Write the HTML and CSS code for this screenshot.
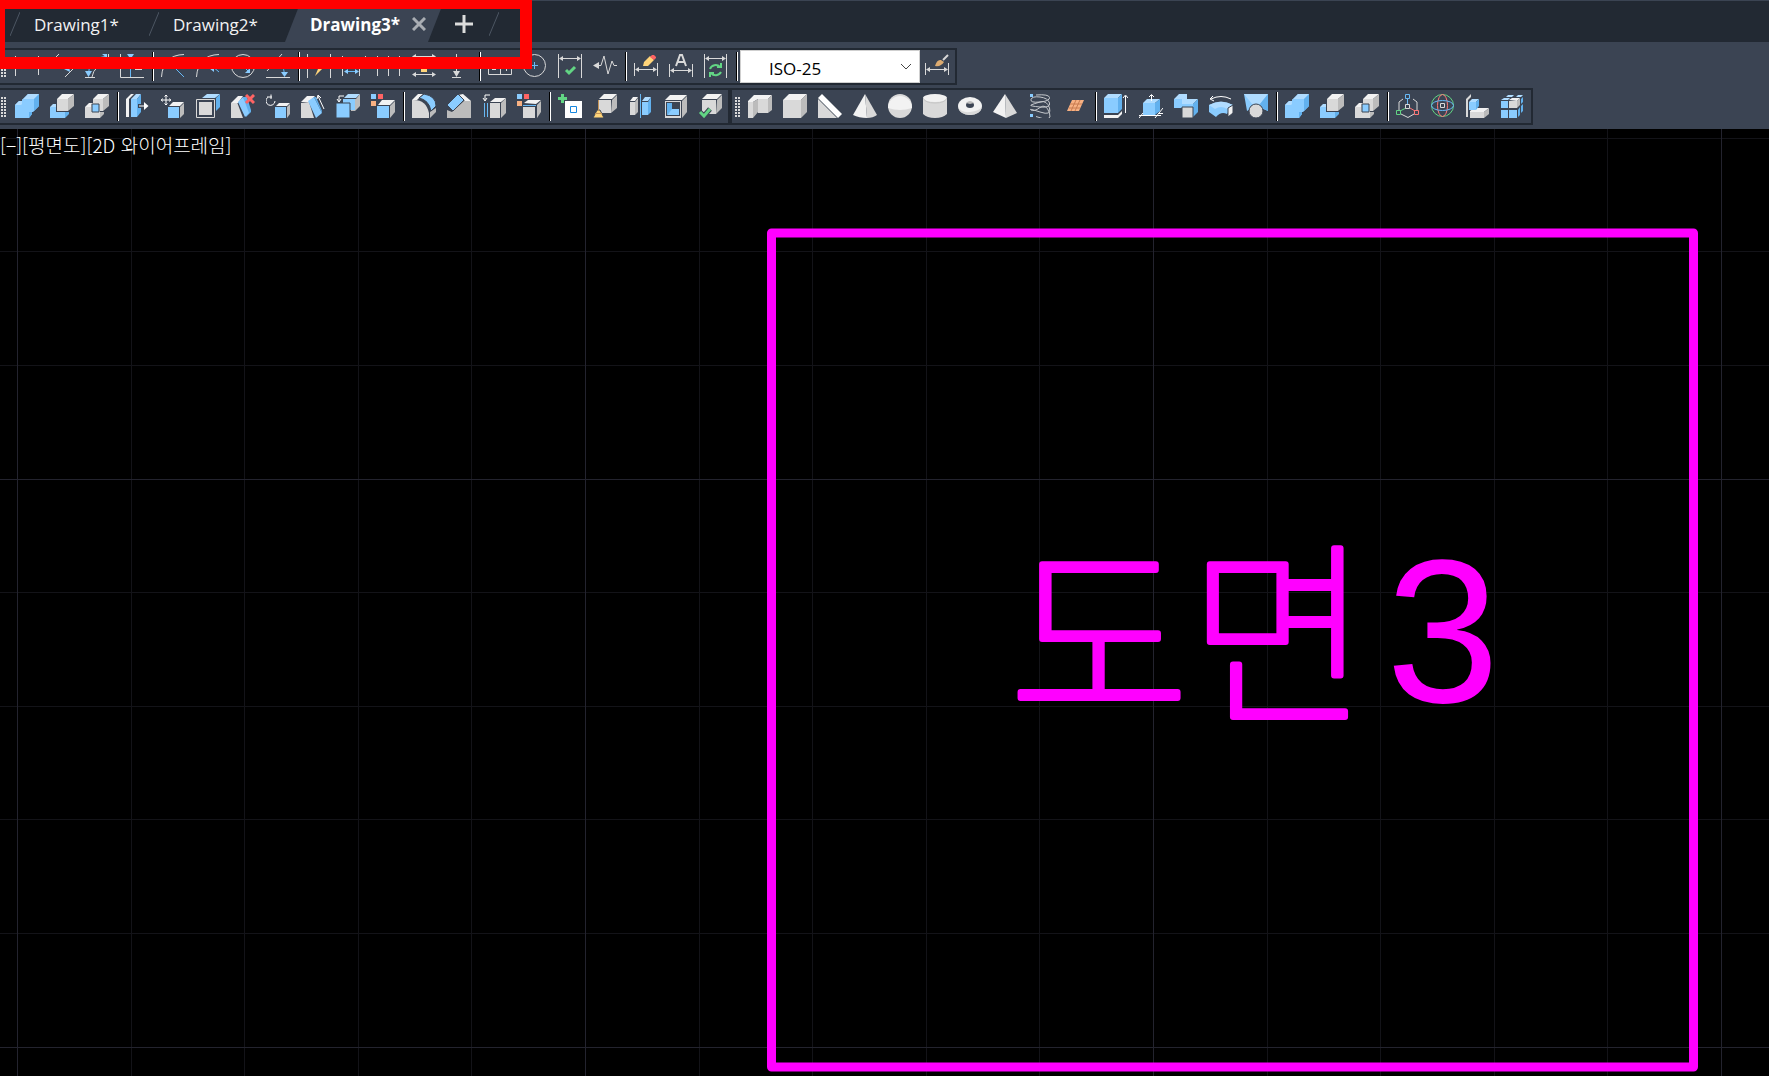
FILE: index.html
```html
<!DOCTYPE html>
<html lang="ko">
<head>
<meta charset="utf-8">
<meta name="viewport" content="width=device-width, initial-scale=1">
<title>Drawing3</title>
<link rel="stylesheet" href="styles.css">
</head>
<body>
<svg class="defs" aria-hidden="true">
  <!-- Solid editing -->
  <symbol id="union" viewBox="0 0 24 24"><path class="b1" d="M0 11 4 7H7V6L13 0H24V12L18 18H17V20L14 24H0Z"/><path class="b2" d="M7 6 13 0H24L19 5H7ZM0 11 4 7H7V10L6 11Z"/><path class="b3" d="M19 5 24 0V12L19 17ZM14 18H17V20L14 24Z"/></symbol>
  <symbol id="subtract" viewBox="0 0 24 24"><path class="b1" d="M0 13H6V18H15V24H0Z"/><path class="b2" d="M0 13 3 10H6V13Z"/><path class="b3" d="M15 18H19V20L15 24Z"/><path class="g1" d="M7 5H18V17H7Z"/><path class="g2" d="M7 5 12 0H24L18 5Z"/><path class="g3" d="M18 5 24 0V12L18 17Z"/></symbol>
  <symbol id="intersect" viewBox="0 0 24 24"><path class="g1" d="M0 13H6V9H15V24H0ZM8 5H18V17H15V9H8Z"/><path class="g2" d="M0 13 4 9H6V13ZM8 5 13 0H24L18 5Z"/><path class="g3" d="M18 5 24 0V12L18 17ZM15 18H19V20L15 24Z"/><path class="b1 edge" d="M7 10H14V18H7Z"/></symbol>
  <symbol id="extrude-face" viewBox="0 0 24 24"><path class="g1" d="M0 5H3V23H0Z"/><path class="g2" d="M0 5 5 0H8L3 5V23H0Z"/><path class="b1" d="M5 5H11V23H5Z"/><path class="b2" d="M5 5 10 0H15L11 5Z"/><path class="b3" d="M11 5 15 0V18L11 23Z"/><path class="dark" d="M12 10H18V14H12Z"/><path class="w" d="M13 11.500H18V8L22.500 12 18 16V12.500H13Z"/></symbol>
  <symbol id="move-face" viewBox="0 0 24 24"><path class="b1" d="M7 13H18V24H7Z"/><path class="g2" d="M8 12 12 8H23L19 12Z"/><path class="g3" d="M19 13 23 9V20L19 24Z"/><path class="lw" d="M5 1V11M0 6H10M3.500 2.500 5 1 6.500 2.500M3.500 9.500 5 11 6.500 9.500M1.500 4.500 0.500 6 1.500 7.500M8.500 4.500 9.500 6 8.500 7.500"/></symbol>
  <symbol id="offset-face" viewBox="0 0 24 24"><path class="b2" d="M6 4 11 0H24L19 4Z"/><path class="b3" d="M20 4 24 0V13L20 17Z"/><path class="lg" d="M.5 5.500H18.500V23.500H.5Z"/><path class="g1" d="M3 8H16V21H3Z"/></symbol>
  <symbol id="delete-face" viewBox="0 0 24 24"><path class="g1" d="M0 9 6 8 12 24H0Z"/><path class="g2" d="M0 9 7 2H12L7 9Z"/><path class="b3" d="M12 3H16L20 16V18L15 23Z"/><path class="b1" d="M7 8 12 3 18 19 14 23Z"/><path class="lx" d="M15 1 23 9M23 1 15 9"/></symbol>
  <symbol id="rotate-face" viewBox="0 0 24 24"><path class="b1" d="M9 13H20V24H9Z"/><path class="g2" d="M10 12 13 9H24L21 12Z"/><path class="g3" d="M21 13 24 10V20L21 24Z"/><path class="lw" d="M1.500 3.500A4.500 4.500 0 1 0 9 7M1 3H6M5 .5V5"/></symbol>
  <symbol id="taper-face" viewBox="0 0 24 24"><path class="g1" d="M0 9 8 8 13 24H0Z"/><path class="g2" d="M0 8 6 2H14L8 8Z"/><path class="b1" d="M7 7 13 3 21 19 15 24Z"/><path class="b3" d="M13 3H15L21 17V19Z"/><path class="lw" d="M17 2 23 15M16 5 17 1 20 4"/></symbol>
  <symbol id="copy-face" viewBox="0 0 24 24"><path class="b2" d="M8 4 12 0H24L20 4Z"/><path class="g3" d="M15 5H20L24 0V12L19 17H15Z"/><path class="b1" d="M7 5H19V16H7Z"/><path class="b1 edge" d="M0 9H14V24H0Z"/><path class="lw" d="M8 2H3V7M1 5 3 8 5 5"/></symbol>
  <symbol id="color-face" viewBox="0 0 24 24"><path class="b1" d="M0 0H5V5H0ZM6 12H18V24H6Z"/><path class="r1" d="M7 0H12V5H7Z"/><path class="o1" d="M0 7H5V12H0Z"/><path class="g2" d="M7 11 11 6H24L19 11Z"/><path class="g3" d="M19 12 24 7V18L19 24Z"/></symbol>
  <symbol id="fillet-edge" viewBox="0 0 24 24"><path class="g1" d="M0 6Q14 5 17 19V24H0Z"/><path class="g2" d="M0 6 6 0H11L5 6Z"/><path class="g3" d="M18 18 24 14V18L18 24Z"/><path class="b1 edge" d="M7 4 12 0Q24 2 24 12L19 17Q17 6 7 4Z"/></symbol>
  <symbol id="chamfer-edge" viewBox="0 0 24 24"><path class="g3" d="M0 16 5 18 17 7 24 7V24H0Z"/><path class="g2" d="M11 1 16 0 24 7 18 7Z"/><path class="b1 edge" d="M0 11 11 0 17 6 6 17Z"/></symbol>
  <symbol id="copy-edge" viewBox="0 0 24 24"><path class="g1" d="M8 9H18V24H8Z"/><path class="g2" d="M8 8 13 4H24L19 8Z"/><path class="g3" d="M19 9 24 4V19L19 24Z"/><path class="lb" d="M2.500 9V23M5.500 9V23"/><path class="lw" d="M8 1H3V6M1 4 3 7 5 4"/></symbol>
  <symbol id="color-edge" viewBox="0 0 24 24"><path class="b1" d="M0 0H5V5H0Z"/><path class="r1" d="M7 0H12V5H7Z"/><path class="o1" d="M0 7H5V12H0Z"/><path class="g1" d="M6 13H18V24H6Z"/><path class="g2" d="M7 9 11 6H24L19 10Z"/><path class="lb" d="M6 11.500H19"/><path class="g3" d="M20 11 24 7V18L20 24Z"/></symbol>
  <symbol id="imprint" viewBox="0 0 24 24"><path class="w" d="M7 7H24V24H7Z"/><path class="ldb" d="M12.500 12.500H18.500V18.500H12.500Z"/><path class="green" d="M3 0H6V3H9V6H6V9H3V6H0V3H3Z"/></symbol>
  <symbol id="clean" viewBox="0 0 24 24"><path class="g1" d="M6 6H18V19H6Z"/><path class="g2" d="M6 5 11 0H24L19 5Z"/><path class="g3" d="M19 6 24 1V14L18 19Z"/><path class="y1 edge" d="M4 16 0 24H11L7 16Z"/><path class="lo" d="M5.500 6V17M2 19.500H9"/></symbol>
  <symbol id="separate" viewBox="0 0 24 24"><path class="g1" d="M2 8H7V21H2Z"/><path class="g2" d="M2 7 5 3H10L7 7Z"/><path class="g3" d="M7 8 10 4V18L7 21Z"/><path class="b1" d="M14 8H20V21H14Z"/><path class="b2" d="M14 7 17 3H23L20 7Z"/><path class="b3" d="M20 8 23 3V18L20 21Z"/><path class="lb" d="M12.500 0V24"/></symbol>
  <symbol id="shell" viewBox="0 0 24 24"><path class="g1" d="M2 7H18V24H2Z"/><path class="g2" d="M2 6 7 1H24L19 6Z"/><path class="g3" d="M19 7 24 2V18L19 24Z"/><path class="dark" d="M3 8H17V22H3Z"/><path class="b3" d="M4 9H9V16L4 21Z"/><path class="b1" d="M4 21 9 15H16V21Z"/></symbol>
  <symbol id="check-solid" viewBox="0 0 24 24"><path class="g1" d="M4 6H18V20H4Z"/><path class="g2" d="M4 5 9 0H24L19 5Z"/><path class="g3" d="M19 6 24 1V14L18 20Z"/><path class="halo" d="M2 18 6 22 12 15"/><path class="lgreen" d="M2 18 6 22 12 15"/></symbol>
  <!-- Modeling -->
  <symbol id="polysolid" viewBox="0 0 24 24"><path class="g2" d="M0 7 6 1H24L20 5H10L5 8H0Z"/><path class="g3" d="M5 8 10 5V18L5 24ZM20 5 24 1V16L20 19Z"/><path class="g1" d="M0 8H5V24H0ZM10 5H20V19H10Z"/></symbol>
  <symbol id="box" viewBox="0 0 24 24"><path class="g1" d="M0 6H18V24H0Z"/><path class="g2" d="M0 6 6 0H24L18 6Z"/><path class="g3" d="M18 6 24 0V18L18 24Z"/></symbol>
  <symbol id="wedge" viewBox="0 0 24 24"><path class="g1" d="M0 5 19 24H0Z"/><path class="w" d="M0 4 4 0 24 20 20 24Z"/></symbol>
  <symbol id="cone" viewBox="0 0 24 24"><path class="g2" d="M12 0 0 21Q6 24 14 24Z"/><path class="g1" d="M12 0 24 21Q20 24 14 24Z"/></symbol>
  <symbol id="sphere" viewBox="0 0 24 24"><circle class="g1" cx="12" cy="12" r="12"/><path class="g2" d="M0 14A12 12 0 1 1 24 14Q12 18 0 14Z"/></symbol>
  <symbol id="cylinder" viewBox="0 0 24 24"><path class="g1" d="M0 4V20Q4 24 12 24T24 20V4Z"/><ellipse class="g2" cx="12" cy="4" rx="12" ry="4"/><path class="thin" d="M0 4Q2 9 12 9T24 4"/></symbol>
  <symbol id="torus" viewBox="0 0 24 24"><ellipse class="g2" cx="12" cy="12" rx="12" ry="9"/><path class="g1" d="M0 13Q3 19 12 18T24 13Q22 21 12 21T0 13Z"/><ellipse class="dark" cx="12" cy="11" rx="4" ry="3"/><path class="g3" d="M8 9Q12 5 16 9L12 10Z"/></symbol>
  <symbol id="pyramid" viewBox="0 0 24 24"><path class="g2" d="M12 0 0 18 13 24Z"/><path class="g1" d="M12 0 24 19 13 24Z"/></symbol>
  <symbol id="helix" viewBox="0 0 24 24"><path class="lg2" d="M8 1Q21 0 21.500 3.500T12 8 3 5.500 12 3 21.500 9 12 13 3 11 12 8 21.500 14 12 18 3 16 12 13.500 21.500 19 8 22.500"/><path class="b1" d="M2 0H5V3H2ZM2 20H5V23H2Z"/></symbol>
  <symbol id="planar" viewBox="0 0 24 24"><path class="o1" d="M9 6H21L16 17H4Z"/><path class="lorange" d="M7 10H19M6 14H17M13 6 8 17M17 6 12 17"/></symbol>
  <symbol id="extrude" viewBox="0 0 24 24"><path class="b1" d="M0 4H14V19H0Z"/><path class="b2" d="M0 4 4 0H18L14 4Z"/><path class="b3" d="M14 4 18 0V15L14 19Z"/><path class="g2" d="M0 21H14L18 17V20L14 24H0Z"/><path class="lw" d="M21.500 2V19M19 4 21.500 1 24 4"/></symbol>
  <symbol id="presspull" viewBox="0 0 24 24"><path class="b1" d="M4 9H16V21H4Z"/><path class="b2" d="M4 9 8 5H21L16 9Z"/><path class="b3" d="M16 9 21 5V17L16 21Z"/><path class="lw" d="M0 21.500H22M16 24 24 14M0 24 4 19M19 19.500H24M12.500 1V7M10 3 12.500 .5 15 3"/></symbol>
  <symbol id="sweep" viewBox="0 0 24 24"><path class="b1" d="M0 5H8V9H19V17L8 14H0Z"/><path class="b2" d="M0 5 5 0H13V5H24L19 10H8V5Z"/><path class="b3" d="M19 10 24 5V18L19 23Z"/><path class="g1 edge" d="M8 13H19V24H8Z"/></symbol>
  <symbol id="revolve" viewBox="0 0 24 24"><path class="b1" d="M0 11Q12 5 24 11L18 20Q12 17 7 23L0 18Z"/><path class="b2" d="M0 11Q12 4 24 11L18 15Q12 11 6 15Z"/><path class="g2 edge" d="M19 14 24 11V19L19 23Z"/><path class="lw" d="M2 5Q12 0 22 5M4 2 1 5 5 7"/></symbol>
  <symbol id="loft" viewBox="0 0 24 24"><path class="b1" d="M0 0H24V17L12 12 3 17Z"/><path class="b2" d="M0 0H24L16 10H8Z"/><path class="b3" d="M24 0V17L18 14 16 10Z"/><circle class="g1 edge" cx="12" cy="17" r="7"/></symbol>
  <symbol id="gizmo" viewBox="0 0 24 24"><path class="lg" d="M7 5 3 8V16M17 5 21 8V16M5 20 12 23.500 18 20"/><path class="lb" d="M11.500 5V11M9.500 .5H13.500V4.500H9.500Z"/><path class="lgr" d="M10 14 4 17M.5 16.500H4.500V20.500H.5Z"/><path class="lr" d="M14 14 19 17M18.500 16.500H22.500V20.500H18.500Z"/><path class="lg" d="M9.500 10.500H13.500V14.500H9.500Z"/></symbol>
  <symbol id="orbit" viewBox="0 0 24 24"><circle class="lgr" cx="11.500" cy="11.500" r="11"/><ellipse class="lr" cx="11.500" cy="11.500" rx="5" ry="11"/><ellipse class="lb" cx="11.500" cy="11.500" rx="11" ry="5"/><path class="dark" d="M8 8H15V15H8Z"/><path class="lg" d="M9.500 9.500H13.500V13.500H9.500Z"/></symbol>
  <symbol id="align3d" viewBox="0 0 24 24"><path class="g1" d="M0 5 5 0V3L2 6V23H0ZM4 17H18V24H4Z"/><path class="g2" d="M4 17 8 14H23L18 18H4Z"/><path class="g3" d="M18 18 23 14V20L18 24Z"/><path class="b1" d="M3 8H10V16H3Z"/><path class="b2" d="M3 8 6 5H13L10 8Z"/><path class="b3" d="M10 8 13 5V12L10 16Z"/></symbol>
  <symbol id="array3d" viewBox="0 0 24 24"><path class="b1" d="M0 7H7V14H0ZM0 16H7V24H0ZM8 16H16V24H8Z"/><path class="b2" d="M0 6 3 4H9L7 6ZM5 3 7 1H13L11 3ZM15 3 17 1H22L20 3Z"/><path class="b3" d="M17 16 19 13V21L17 23ZM20 12 22 10V17L20 19ZM20 5 22 3V8L20 10Z"/><path class="g1" d="M8 7H16V14H8Z"/><path class="g2" d="M8 6 11 4H19L16 7Z"/><path class="g3" d="M16 7 19 4V11L16 14Z"/></symbol>
  <!-- Dimensions -->
  <symbol id="dim-linear" viewBox="0 0 24 24"><path class="lg" d="M.5 2V22M23.500 2V21"/><path class="lb" d="M2 8H22M5 5 2 8 5 11M19 5 22 8 19 11"/></symbol>
  <symbol id="dim-aligned" viewBox="0 0 24 24"><path class="lg" d="M9 0 0 9M24 14 15 23"/><path class="lb" d="M6 4 19 17"/><path class="b1" d="M20 18 14 15 19 12Z"/></symbol>
  <symbol id="dim-arc" viewBox="0 0 24 24"><path class="lg" d="M0 23.500H10M7 23Q9 11 23 9M23.500 0V8"/><path class="lb" d="M3.500 20Q3 4 22 2"/><path class="b1" d="M0 17H7L3.500 23ZM17 0H22V4Z"/></symbol>
  <symbol id="dim-ordinate" viewBox="0 0 24 24"><path class="lg" d="M.5 0V23.500H24M15 15.500H22"/><path class="lb" d="M10.500 0V23"/><path class="b1" d="M7 0H14L10.500 5Z"/></symbol>
  <symbol id="dim-radius" viewBox="0 0 24 24"><path class="lg" d="M23 .5Q2 1 .5 23"/><path class="lb" d="M8 8 23 23"/></symbol>
  <symbol id="dim-jogged" viewBox="0 0 24 24"><path class="lg" d="M23 .5Q2 1 .5 23"/><path class="lb" d="M7 8 17 14 16 12 23 18"/><path class="b1" d="M13 14H18V18Z"/></symbol>
  <symbol id="dim-diameter" viewBox="0 0 24 24"><circle class="lg" cx="12" cy="12" r="11.500"/><path class="lb" d="M5 5 19 19"/><path class="b1" d="M14 19 19 14V19Z"/></symbol>
  <symbol id="dim-angular" viewBox="0 0 24 24"><path class="lg" d="M0 23.500H24M16 0 1 17"/><path class="lb" d="M8 9Q18 10 18.500 20"/><path class="b1" d="M15 18H22L18.500 23Z"/></symbol>
  <symbol id="dim-quick" viewBox="0 0 24 24"><path class="lg" d="M.5 0V24M23.500 0V24M2 3.500H22"/><path class="y1" d="M11 6 6 15H11L8 22 17 13H12L17 6Z"/></symbol>
  <symbol id="dim-baseline" viewBox="0 0 24 24"><path class="lg" d="M.5 2V22M17.500 10V22M23.500 2V5"/><path class="lb" d="M4 17.500H15M2 8H24"/><path class="b1" d="M2 17.500 6 15V20ZM17 17.500 13 15V20Z"/></symbol>
  <symbol id="dim-continue" viewBox="0 0 24 24"><path class="lg" d="M.5 2V22M11.500 2V22M22.500 2V22"/><path class="lb" d="M2 8H22"/></symbol>
  <symbol id="dim-space" viewBox="0 0 24 24"><path class="lg" d="M1 2.500H23M1 20.500H23"/><path class="g1" d="M0 2.500 4 0V5ZM24 2.500 20 0V5ZM0 20.500 4 18V23ZM24 20.500 20 18V23Z"/><path class="y1" d="M9 8H15V18H9Z"/></symbol>
  <symbol id="dim-break" viewBox="0 0 24 24"><path class="lg" d="M9.500 0V18M5 23.500H14"/><path class="g1" d="M6 17H13L9.500 23Z"/></symbol>
  <symbol id="tolerance" viewBox="0 0 24 24"><path class="lg" d="M.5 6.500H23.500V20.500H.5ZM12.500 6V20M18.500 11V17M4 15.500H8"/></symbol>
  <symbol id="center-mark" viewBox="0 0 24 24"><circle class="lg" cx="11.500" cy="11.500" r="11"/><path class="lb" d="M11.500 8V15M8 11.500H15"/></symbol>
  <symbol id="inspect" viewBox="0 0 24 24"><path class="lg" d="M.5 0V24M23.500 0V24M2 4.500H22"/><path class="g1" d="M1 4.500 5 2V7ZM23 4.500 19 2V7Z"/><path class="lgreen" d="M8 16 11 19 17 13"/></symbol>
  <symbol id="jog-line" viewBox="0 0 24 24"><path class="lg" d="M4 11.500H8L11 2 15 20 19 7 21 11.500H24"/><path class="g1" d="M0 11.500 6 8V15Z"/></symbol>
  <symbol id="dim-edit" viewBox="0 0 24 24"><path class="lg" d="M.5 9V22M23.500 9V22M2 15.500H22"/><path class="g1" d="M1 15.500 5 13V18ZM23 15.500 19 13V18Z"/><path class="y1" d="M9 12 10 8 16 2 20 6 14 12Z"/><path class="r1" d="M16 3 18 1H20L22 3V4L20 6Z"/></symbol>
  <symbol id="dim-text" viewBox="0 0 24 24"><path class="lg" d="M.5 10V23M23.500 10V23M2 16.500H22"/><path class="g1" d="M1 16.500 5 14V19ZM23 16.500 19 14V19Z"/><path class="la" d="M7 12 11 1H13L17 12M9 8H15"/></symbol>
  <symbol id="dim-update" viewBox="0 0 24 24"><path class="lg" d="M.5 0V24M22.500 0V24M2 4.500H21"/><path class="g1" d="M1 4.500 5 2V7ZM22 4.500 18 2V7Z"/><path class="lgr2" d="M6 15A6 6 0 0 1 16 13M17 9V13H13M17 18A6 6 0 0 1 7 19M6 23V19H10"/></symbol>
  <symbol id="dim-style" viewBox="0 0 24 24"><path class="lg" d="M.5 9V21M23.500 9V21M2 15.500H22"/><path class="g1" d="M1 15.500 5 13V18ZM23 15.500 19 13V18Z"/><path class="brush" d="M10 12Q12 5 16 6L19 8Q16 13 10 12Z"/><path class="la" d="M18 6 23 1"/></symbol>
</svg>

<header class="file-tabs">
  <nav class="tab-list" aria-label="Drawings">
    <svg class="slash" viewBox="0 0 10 24" aria-hidden="true"><path d="M10 0 0 24"/></svg>
    <a class="tab" href="#drawing1">Drawing1*</a>
    <svg class="slash" viewBox="0 0 10 24" aria-hidden="true"><path d="M10 0 0 24"/></svg>
    <a class="tab" href="#drawing2">Drawing2*</a>
    <div class="tab-active">
      <a class="tab-name" href="#drawing3" aria-current="page">Drawing3*</a>
      <button class="tab-close" aria-label="Close"><svg viewBox="0 0 14 14"><path d="M1 1 13 13M13 1 1 13"/></svg></button>
    </div>
    <button class="tab-new" aria-label="New drawing"><svg viewBox="0 0 18 18"><path d="M9 0V18M0 9H18"/></svg></button>
    <svg class="slash" viewBox="0 0 10 24" aria-hidden="true"><path d="M10 0 0 24"/></svg>
  </nav>
</header>

<div class="toolbars">
  <div class="toolbar-row">
    <div class="toolbar first" role="toolbar" aria-label="Dimension">
      <span class="grip"></span>
      <button class="tool" aria-label="Linear"><svg><use href="#dim-linear"/></svg></button>
      <button class="tool" aria-label="Aligned"><svg><use href="#dim-aligned"/></svg></button>
      <button class="tool" aria-label="Arc length"><svg><use href="#dim-arc"/></svg></button>
      <button class="tool" aria-label="Ordinate"><svg><use href="#dim-ordinate"/></svg></button>
      <span class="sep"></span>
      <button class="tool" aria-label="Radius"><svg><use href="#dim-radius"/></svg></button>
      <button class="tool" aria-label="Jogged"><svg><use href="#dim-jogged"/></svg></button>
      <button class="tool" aria-label="Diameter"><svg><use href="#dim-diameter"/></svg></button>
      <button class="tool" aria-label="Angular"><svg><use href="#dim-angular"/></svg></button>
      <span class="sep"></span>
      <button class="tool" aria-label="Quick dimension"><svg><use href="#dim-quick"/></svg></button>
      <button class="tool" aria-label="Baseline"><svg><use href="#dim-baseline"/></svg></button>
      <button class="tool" aria-label="Continue"><svg><use href="#dim-continue"/></svg></button>
      <button class="tool" aria-label="Dimension space"><svg><use href="#dim-space"/></svg></button>
      <button class="tool" aria-label="Dimension break"><svg><use href="#dim-break"/></svg></button>
      <span class="sep"></span>
      <button class="tool" aria-label="Tolerance"><svg><use href="#tolerance"/></svg></button>
      <button class="tool" aria-label="Center mark"><svg><use href="#center-mark"/></svg></button>
      <button class="tool" aria-label="Inspection"><svg><use href="#inspect"/></svg></button>
      <button class="tool" aria-label="Jogged linear"><svg><use href="#jog-line"/></svg></button>
      <span class="sep"></span>
      <button class="tool" aria-label="Dimension edit"><svg><use href="#dim-edit"/></svg></button>
      <button class="tool" aria-label="Dimension text edit"><svg><use href="#dim-text"/></svg></button>
      <button class="tool" aria-label="Dimension update"><svg><use href="#dim-update"/></svg></button>
      <span class="sep"></span>
      <div class="combo">
        <select aria-label="Dimension style"><option>ISO-25</option></select>
        <svg class="chevron" viewBox="0 0 12 8" aria-hidden="true"><path d="M1 1 6 6 11 1"/></svg>
      </div>
      <button class="tool" aria-label="Dimension style manager"><svg><use href="#dim-style"/></svg></button>
    </div>
  </div>
  <div class="toolbar-row">
    <div class="toolbar first" role="toolbar" aria-label="Solid editing">
      <span class="grip"></span>
      <button class="tool" aria-label="Union"><svg><use href="#union"/></svg></button>
      <button class="tool" aria-label="Subtract"><svg><use href="#subtract"/></svg></button>
      <button class="tool" aria-label="Intersect"><svg><use href="#intersect"/></svg></button>
      <span class="sep"></span>
      <button class="tool" aria-label="Extrude faces"><svg><use href="#extrude-face"/></svg></button>
      <button class="tool" aria-label="Move faces"><svg><use href="#move-face"/></svg></button>
      <button class="tool" aria-label="Offset faces"><svg><use href="#offset-face"/></svg></button>
      <button class="tool" aria-label="Delete faces"><svg><use href="#delete-face"/></svg></button>
      <button class="tool" aria-label="Rotate faces"><svg><use href="#rotate-face"/></svg></button>
      <button class="tool" aria-label="Taper faces"><svg><use href="#taper-face"/></svg></button>
      <button class="tool" aria-label="Copy faces"><svg><use href="#copy-face"/></svg></button>
      <button class="tool" aria-label="Color faces"><svg><use href="#color-face"/></svg></button>
      <span class="sep"></span>
      <button class="tool" aria-label="Fillet edge"><svg><use href="#fillet-edge"/></svg></button>
      <button class="tool" aria-label="Chamfer edge"><svg><use href="#chamfer-edge"/></svg></button>
      <button class="tool" aria-label="Copy edges"><svg><use href="#copy-edge"/></svg></button>
      <button class="tool" aria-label="Color edges"><svg><use href="#color-edge"/></svg></button>
      <span class="sep"></span>
      <button class="tool" aria-label="Imprint"><svg><use href="#imprint"/></svg></button>
      <button class="tool" aria-label="Clean"><svg><use href="#clean"/></svg></button>
      <button class="tool" aria-label="Separate"><svg><use href="#separate"/></svg></button>
      <button class="tool" aria-label="Shell"><svg><use href="#shell"/></svg></button>
      <button class="tool" aria-label="Check"><svg><use href="#check-solid"/></svg></button>
    </div>
    <div class="toolbar" role="toolbar" aria-label="Modeling">
      <span class="grip"></span>
      <button class="tool" aria-label="Polysolid"><svg><use href="#polysolid"/></svg></button>
      <button class="tool" aria-label="Box"><svg><use href="#box"/></svg></button>
      <button class="tool" aria-label="Wedge"><svg><use href="#wedge"/></svg></button>
      <button class="tool" aria-label="Cone"><svg><use href="#cone"/></svg></button>
      <button class="tool" aria-label="Sphere"><svg><use href="#sphere"/></svg></button>
      <button class="tool" aria-label="Cylinder"><svg><use href="#cylinder"/></svg></button>
      <button class="tool" aria-label="Torus"><svg><use href="#torus"/></svg></button>
      <button class="tool" aria-label="Pyramid"><svg><use href="#pyramid"/></svg></button>
      <button class="tool" aria-label="Helix"><svg><use href="#helix"/></svg></button>
      <button class="tool" aria-label="Planar surface"><svg><use href="#planar"/></svg></button>
      <span class="sep"></span>
      <button class="tool" aria-label="Extrude"><svg><use href="#extrude"/></svg></button>
      <button class="tool" aria-label="Presspull"><svg><use href="#presspull"/></svg></button>
      <button class="tool" aria-label="Sweep"><svg><use href="#sweep"/></svg></button>
      <button class="tool" aria-label="Revolve"><svg><use href="#revolve"/></svg></button>
      <button class="tool" aria-label="Loft"><svg><use href="#loft"/></svg></button>
      <span class="sep"></span>
      <button class="tool" aria-label="Union"><svg><use href="#union"/></svg></button>
      <button class="tool" aria-label="Subtract"><svg><use href="#subtract"/></svg></button>
      <button class="tool" aria-label="Intersect"><svg><use href="#intersect"/></svg></button>
      <span class="sep"></span>
      <button class="tool" aria-label="3D move"><svg><use href="#gizmo"/></svg></button>
      <button class="tool" aria-label="3D rotate"><svg><use href="#orbit"/></svg></button>
      <button class="tool" aria-label="3D align"><svg><use href="#align3d"/></svg></button>
      <button class="tool" aria-label="3D array"><svg><use href="#array3d"/></svg></button>
    </div>
  </div>
</div>

<main class="viewport">
  <svg class="drawing">
    <defs>
      <pattern id="grid" x="17" y="350" width="568" height="568" patternUnits="userSpaceOnUse">
        <path class="minor" d="M114.500 0V568M227.500 0V568M341.500 0V568M454.500 0V568M0 113.500H568M0 227.500H568M0 340.500H568M0 454.500H568"/>
        <path class="major" d="M.5 0V568M0 .5H568"/>
      </pattern>
    </defs>
    <rect width="100%" height="100%" fill="url(#grid)"/>
    <rect class="sheet" x="771.500" y="104" width="922" height="834" />
    <text class="sheet-name" x="1009" y="579">도면</text>
    <text class="sheet-number" x="1386" y="573">3</text>
  </svg>
  <p class="view-label">[−][평면도][2D 와이어프레임]</p>
</main>
<div class="callout"></div>
</body>
</html>
```
FILE: styles.css
```css
:root {
  --bar: #3b4453;
  --dark: #222933;
  --line: #d9d9d9;
  --blue: #8accff;
  --ui: "Open Sans", "Noto Sans CJK KR", sans-serif;
}
* { box-sizing: border-box; }
body {
  position: relative;
  display: flex;
  flex-direction: column;
  height: 100vh;
  margin: 0;
  overflow: hidden;
  background: #000;
  color: #f2f2f2;
  font: 17px/24px var(--ui);
}
button { padding: 0; border: 0; background: none; color: inherit; font: inherit; }
.defs { position: absolute; width: 0; height: 0; }

/* File tabs */
.file-tabs { flex: none; height: 42px; background: var(--dark); border-top: 1px solid var(--bar); }
.tab-list { display: flex; align-items: center; height: 41px; padding: 4px 0 0 10px; }
.slash { flex: none; width: 10px; height: 24px; }
.slash path { fill: none; stroke: #4d5663; stroke-width: 1; }
.tab { width: 129px; padding: 3px 0 0 14px; color: inherit; text-decoration: none; }
.tab + .tab-active { margin-left: -3px; }
.tab-active {
  display: flex;
  align-items: center;
  align-self: stretch;
  gap: 13px;
  width: 159px;
  margin-top: -4px;
  padding: 4px 0 0 25px;
  background: var(--bar);
  clip-path: polygon(16px 0, 100% 0, 143px 100%, 0 100%);
}
.tab-name { width: 89px; padding-top: 3px; color: #fff; font-weight: 700; text-decoration: none; }
.tab-close, .tab-new { display: flex; }
.tab-close svg { width: 14px; height: 14px; fill: none; stroke: #a9adb3; stroke-width: 3; }
.tab-new { margin: 0 16px 0 11px; }
.tab-new svg { width: 18px; height: 18px; fill: none; stroke: #dcdcdc; stroke-width: 3; }

/* Toolbars */
.toolbars { display: flex; flex: none; flex-direction: column; gap: 3px; padding: 6px 0 4px; background: var(--bar); }
.toolbar-row { display: flex; }
.toolbar { display: flex; align-items: center; height: 37px; border: 2px solid var(--dark); }
.toolbar.first { border-left: 0; }
.grip {
  width: 5px;
  height: 20px;
  margin: 0 3px;
  background:
    repeating-linear-gradient(0deg, transparent 0 2px, var(--bar) 2px 3px),
    repeating-linear-gradient(90deg, var(--line) 0 2px, transparent 2px 3px);
}
.first .grip { margin: 0 4px 0 1px; }
.sep { width: 6px; height: 29px; background: linear-gradient(90deg, transparent 2px, #000 2px 3px, #fff 3px 4px, transparent 4px); }
.tool { display: flex; align-self: flex-start; width: 35px; padding: 4px 0 0 5px; }
.tool svg { width: 24px; height: 24px; }
.combo { display: grid; align-self: stretch; align-items: center; width: 180px; }
.combo select {
  grid-area: 1 / 1;
  align-self: stretch;
  padding: 5px 0 0 28px;
  border: 1px solid #cfcfcf;
  border-radius: 0;
  appearance: none;
  background: #fff;
  color: #000;
  font: 17px/24px var(--ui);
}
.chevron { grid-area: 1 / 1; justify-self: end; width: 12px; height: 8px; margin-right: 8px; fill: none; stroke: #444; }

/* Icon fills */
.b1 { fill: var(--blue); }
.b2 { fill: #b0dcff; }
.b3 { fill: #62b1ee; }
.g1 { fill: var(--line); }
.g2 { fill: #f2f2f2; }
.g3 { fill: #bcbcbc; }
.w { fill: #fff; }
.r1 { fill: #ff6464; }
.o1 { fill: #f7b183; }
.y1 { fill: #ffd479; }
.green { fill: #62d584; }
.brush { fill: #dcab70; }
.dark { fill: var(--bar); }
.edge { stroke: var(--bar); stroke-width: 1; }

/* Icon strokes */
.lg, .lw, .lb, .ldb, .lx, .lo, .lr, .lgr, .lgr2, .lg2, .lgreen, .lorange, .thin, .halo, .la { fill: none; stroke-width: 1; }
.lg { stroke: var(--line); }
.lw { stroke: #fff; }
.lb { stroke: #68b9f5; }
.ldb { stroke: #1687df; }
.lx { stroke: #ff6464; stroke-width: 3; }
.lo { stroke: #c59558; }
.lr { stroke: #ff7777; }
.lgr { stroke: #62d584; }
.lgr2 { stroke: #62d584; stroke-width: 2; }
.lg2 { stroke: #c5c8cc; }
.lgreen { stroke: #62d584; stroke-width: 3; }
.lorange { stroke: #c87c50; }
.thin { stroke: #c4c4c4; }
.halo { stroke: var(--bar); stroke-width: 5; }
.la { stroke: var(--line); stroke-width: 2; }

/* Model space */
.viewport { position: relative; flex: 1; min-height: 0; overflow: hidden; }
.drawing { position: absolute; inset: 0; width: 100%; height: 100%; }
.minor { fill: none; stroke: #131318; }
.major { fill: none; stroke: #23232e; }
.sheet { fill: none; stroke: #f0f; stroke-width: 9; stroke-linejoin: round; }
.sheet-name, .sheet-number { fill: #f0f; }
.sheet-name { font: 100 196px "Noto Sans CJK KR", sans-serif; stroke: #f0f; stroke-width: 6; stroke-linejoin: round; }
.sheet-number { font: 204px "Liberation Sans", sans-serif; }
.view-label { position: relative; margin: 4px 0 0; color: #fff; font: 300 19px/24px "Noto Sans CJK KR", sans-serif; }

/* Highlight around the file tabs */
.callout { position: absolute; top: -3px; left: -7px; width: 539px; height: 72px; border: 12px solid #f00; }
```
